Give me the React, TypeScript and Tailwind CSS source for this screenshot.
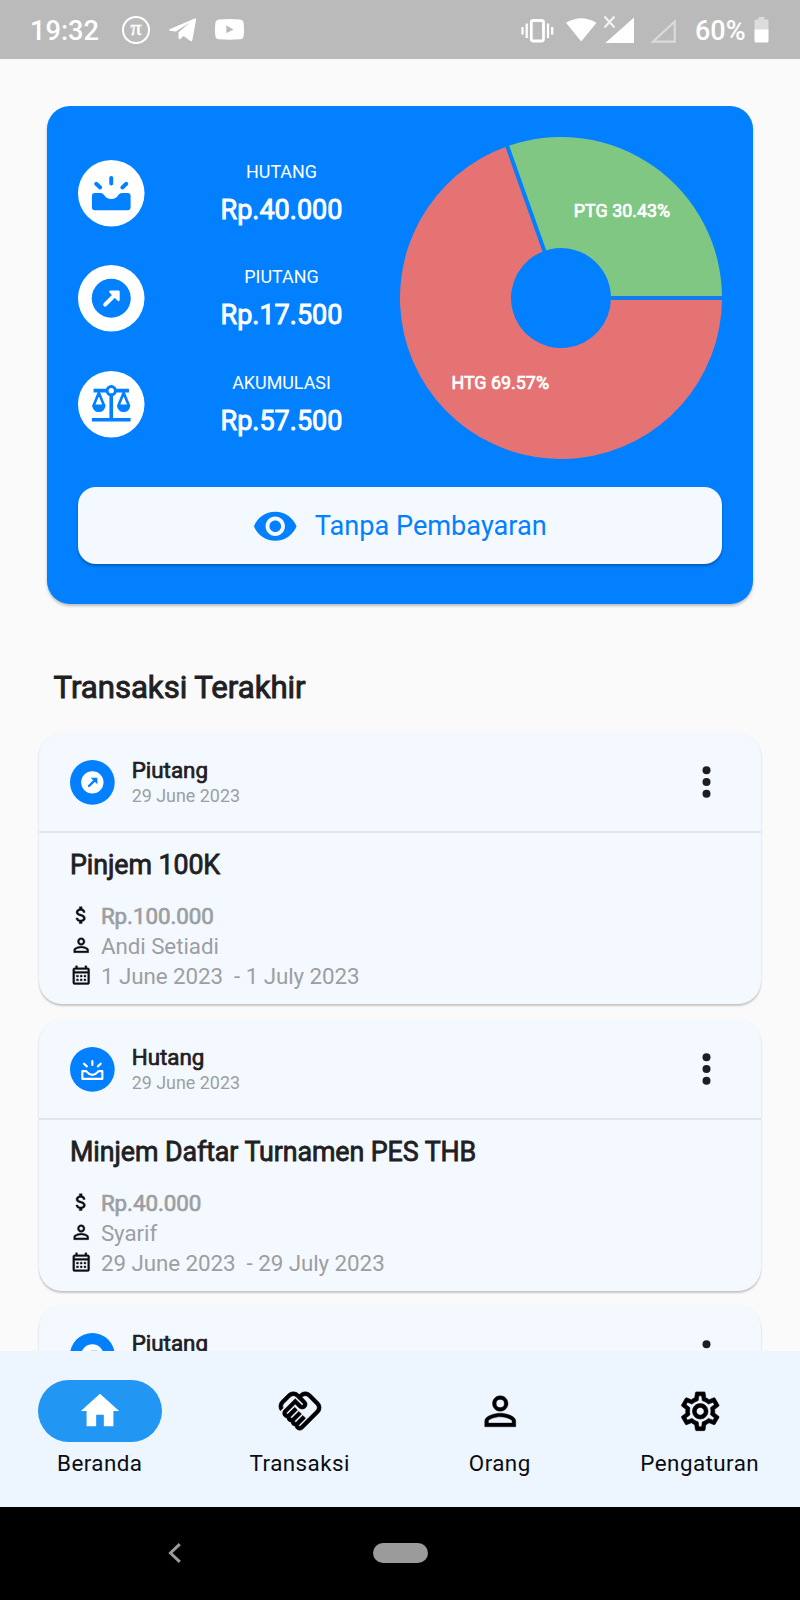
import React from "react";
import {
  MdHome,
  MdOutlineHandshake,
  MdOutlineSettings,
  MdPersonOutline,
  MdVisibility,
  MdAttachMoney,
  MdOutlineCalendarMonth,
} from "react-icons/md";

type Kind = "Piutang" | "Hutang";

function StatusBar() {
  return (
    <header className="flex h-[59px] shrink-0 items-center justify-between bg-[#bababa] text-white">
      <div className="flex items-center pl-[30px]">
        <span className="w-[92px] pt-[2px] text-[27.2px] leading-[58px] font-medium">19:32</span>
        <span className="flex h-[28px] w-[28px] items-center justify-center rounded-full border-[2.3px] border-white pb-[4px] font-['Liberation_Serif',serif] text-[22px] leading-none [-webkit-text-stroke:0.500px_currentColor]">
          π
        </span>
        <svg className="ml-[19px] h-[24px] w-[27px]" viewBox="0 0 27 24" fill="#fff">
          <path d="M0.6 11.2 25.6.6Q27.4 0 27 2L23.4 22Q23 24 21.4 23L14.6 18 11.2 21Q9.8 22 9.6 20L9.4 14.6 20.6 4.8 6.8 13.6 1 12.8Q-.6 12 .6 11.2Z" />
        </svg>
        <svg className="ml-[19px] h-[21px] w-[29px]" viewBox="0 0 29 21">
          <path fill="#fff" d="M4 .5Q14.5-.5 25 .5 28.5 1 28.7 4.500 29.300 10.500 28.700 16.500 28.500 20 25 20.300 14.500 21 4 20.300.500 20 .300 16.500-.300 10.500.300 4.500.500 1 4 .500Z" />
          <path fill="#bababa" d="M11.300 6.500 18.500 10.400 11.300 14.300Z" />
        </svg>
      </div>
      <div className="flex items-center pr-[31px]">
        <svg className="h-[30px] w-[160px]" viewBox="520 14 160 30">
          <rect x="531.3" y="19.500" width="12.200" height="20.500" rx="2" fill="none" stroke="#fff" strokeWidth="2.800" />
          <path stroke="#fff" strokeWidth="2.300" d="M522.500 26v7.500M526.700 22.500v14.500M548 22.500v14.500M552.200 26v7.500" />
          <path fill="#fff" d="M566 21.800Q581.200 12.500 596.500 21.800L582 39.500Q581.200 40.500 580.400 39.500Z" />
          <path fill="#fff" d="M634 16.500V42H605.300Z" />
          <path stroke="#f1f1f1" strokeWidth="2.200" d="M604.500 15.500 614.500 26.500M614.500 15.500 604.500 26.500" />
          <path fill="none" stroke="#dadada" strokeWidth="2.200" d="M674.800 20.500V40.700H653Z" />
        </svg>
        <span className="ml-[15.500px] w-[59px] pt-[2px] text-[27px] leading-[58px] font-medium">60%</span>
        <svg className="h-[26px] w-[15px]" viewBox="0 0 15 26">
          <path fill="#dcdcdc" d="M4.500 0h6v2.500h3Q14.500 2.500 14.500 4v9H.500V4Q.500 2.500 1.500 2.500h3Z" />
          <path fill="#fff" d="M.500 12.500h14V24Q14.500 25.500 13 25.500H2Q.500 25.500.500 24Z" />
        </svg>
      </div>
    </header>
  );
}

function TrayBadge() {
  return (
    <svg className="size-[66.500px] overflow-visible" viewBox="0 0 201 201">
      <circle cx="100.500" cy="100.500" r="100.500" fill="#fff" />
      <path
        fill="#0280ff"
        d="M51 100H68Q75 100 79 106 86 118 100.500 118 115 118 122 106 126 100 133 100H150Q159 100 159 109V143Q159 152 150 152H51Q42 152 42 143V109Q42 100 51 100Z"
      />
      <path stroke="#0280ff" strokeWidth="12" strokeLinecap="round" d="M100.500 54V71M55 72 67 83M146 72 134 83" />
    </svg>
  );
}

function ArrowBadge() {
  return (
    <svg className="size-[66.500px] overflow-visible" viewBox="0 0 201 201">
      <circle cx="100.500" cy="100.500" r="100.500" fill="#fff" />
      <circle cx="100.500" cy="100.500" r="59" fill="#0280ff" />
      <path stroke="#fff" strokeWidth="12" strokeLinecap="round" d="M82 120 112 90" />
      <path fill="#fff" d="M97 77H122Q126 77 126 81V106Q124 112 120 108L95 83Q92 78 97 77Z" />
    </svg>
  );
}

function ScaleBadge() {
  return (
    <svg className="size-[66.500px] overflow-visible" viewBox="0 0 201 201">
      <circle cx="100.500" cy="100.500" r="100.500" fill="#fff" />
      <g fill="none" stroke="#0280ff">
        <path strokeWidth="11" d="M42 147.500H159M100.500 72V147M47 59.500H87M114 59.500H154" />
        <circle cx="100.500" cy="59.500" r="12.500" strokeWidth="9" />
        <path strokeWidth="8" strokeLinejoin="round" d="M63 66 47 105H79ZM138 66 122 105H154Z" />
      </g>
      <path fill="#0280ff" d="M43 104H83Q81 124 63 124 45 124 43 104ZM118 104H158Q156 124 138 124 120 124 118 104Z" />
    </svg>
  );
}

function KindIcon({ kind }: { kind: Kind }) {
  return (
    <svg className="size-[44.700px] shrink-0 overflow-visible" viewBox="0 0 134 134">
      <circle cx="67" cy="67" r="67" fill="#0280ff" />
      {kind === "Piutang" ? (
        <>
          <circle cx="67" cy="67" r="33.500" fill="#fff" />
          <path stroke="#0280ff" strokeWidth="7" strokeLinecap="round" d="M57 78 74 61" />
          <path fill="#0280ff" d="M62 53H82V73Z" />
        </>
      ) : (
        <g fill="none" stroke="#fff" strokeWidth="6.500" strokeLinecap="round" strokeLinejoin="round">
          <path d="M37 72.500H47Q50 72.500 52 76 58 83.500 67 83.500 76 83.500 82 76 84 72.500 87 72.500H97V95.500H37Z" />
          <path d="M67 42V54M42 50 50.500 58M92 50 83.500 58" />
        </g>
      )}
    </svg>
  );
}

function SummaryRow({ icon, label, value }: { icon: React.ReactNode; label: string; value: string }) {
  return (
    <div className="flex h-[66.500px] items-center">
      {icon}
      <div className="flex w-[274px] flex-col items-center text-white">
        <span className="text-[17.900px] leading-[21px]">{label}</span>
        <span className="mt-[12.300px] text-[27px] leading-[32px] [-webkit-text-stroke:0.900px_currentColor]">{value}</span>
      </div>
    </div>
  );
}

function PieChart() {
  return (
    <svg className="-ml-[19px] h-[322px] w-[322px] shrink-0 text-[17.900px]" viewBox="-161 -161 322 322">
      <path fill="#e57373" d="M50 0H161A161 161 0 1 1 -53.700 -151.800L-16.700 -47.100A50 50 0 1 0 50 0Z" />
      <path fill="#81c784" d="M50 0H161A161 161 0 0 0 -53.700 -151.800L-16.700 -47.100A50 50 0 0 1 50 0Z" />
      <path stroke="#0f7cf0" strokeWidth="4" d="M49 0H161" />
      <path stroke="#0280ff" strokeWidth="4" d="M-16.300 -46.100 -54 -152.700" />
      <g fill="#fff" stroke="#fff" strokeWidth="0.700" textAnchor="middle">
        <text x="61" y="-81.400">PTG 30.43%</text>
        <text x="-60.800" y="91">HTG 69.57%</text>
      </g>
    </svg>
  );
}

function SummaryCard() {
  return (
    <section className="mx-[47px] mt-[47px] flex h-[497.500px] shrink-0 flex-col rounded-[23px] bg-[#0280ff] px-[31px] pt-[31.400px] shadow-[0_2px_3px_rgba(0,0,0,0.250)]">
      <div className="flex">
        <div className="flex shrink-0 flex-col gap-[39px] pt-[22.600px]">
          <SummaryRow icon={<TrayBadge />} label="HUTANG" value="Rp.40.000" />
          <SummaryRow icon={<ArrowBadge />} label="PIUTANG" value="Rp.17.500" />
          <SummaryRow icon={<ScaleBadge />} label="AKUMULASI" value="Rp.57.500" />
        </div>
        <PieChart />
      </div>
      <button className="mt-[27.600px] flex h-[77.300px] items-center justify-center gap-[16px] rounded-[18px] bg-[#f4f9ff] pt-[1px] pr-[1px] text-[#0280ff] shadow-[0_2px_3px_rgba(0,0,0,0.300)]">
        <MdVisibility className="size-[46.500px]" />
        <span className="text-[27.150px] leading-[32px]">Tanpa Pembayaran</span>
      </button>
    </section>
  );
}

interface Details {
  title: string;
  amount: string;
  person: string;
  period: string;
}

interface Transaction {
  kind: Kind;
  date?: string;
  details?: Details;
}

const transactions: Transaction[] = [
  {
    kind: "Piutang",
    date: "29 June 2023",
    details: { title: "Pinjem 100K", amount: "Rp.100.000", person: "Andi Setiadi", period: "1 June 2023  - 1 July 2023" },
  },
  {
    kind: "Hutang",
    date: "29 June 2023",
    details: { title: "Minjem Daftar Turnamen PES THB", amount: "Rp.40.000", person: "Syarif", period: "29 June 2023  - 29 July 2023" },
  },
  { kind: "Piutang" },
];

const detailIcon = "mt-[2.500px] mr-[8.500px] size-[22.400px] text-[#0c0d0e] [&>path+path]:[stroke-width:0.400px]";

function TransactionDetails({ title, amount, person, period }: Details) {
  return (
    <>
      <h3 className="mt-[15px] pl-[31px] text-[26.800px] leading-[34px] font-normal tracking-[-0.080px] text-[#1e2023] [-webkit-text-stroke:0.800px_currentColor]">{title}</h3>
      <div className="mt-[19px] flex flex-col pl-[31px] text-[22.350px] leading-[30px] tracking-[-0.050px] whitespace-pre text-[#9c9fa2]">
        <div className="flex h-[30.200px]">
          <MdAttachMoney className={detailIcon} />
          <span className="[-webkit-text-stroke:0.700px_currentColor]">{amount}</span>
        </div>
        <div className="flex h-[30px]">
          <MdPersonOutline className={detailIcon} />
          <span>{person}</span>
        </div>
        <div className="flex h-[30px]">
          <MdOutlineCalendarMonth className={detailIcon} />
          <span>{period}</span>
        </div>
      </div>
    </>
  );
}

function TransactionCard({ item }: { item: Transaction }) {
  return (
    <article className="flex h-[271.500px] shrink-0 flex-col rounded-[23px] bg-[#f4f9ff] shadow-[0_2px_2px_rgba(0,0,0,0.200),0_0_2px_rgba(0,0,0,0.060)]">
      <div className="flex h-[100.500px] items-center border-b-2 border-[#e0e6ec] pr-[50px] pl-[31px]">
        <KindIcon kind={item.kind} />
        <div className="ml-[17px] flex h-[50.500px] grow flex-col">
          <span className="text-[22.400px] leading-[26px] text-[#1e2023] [-webkit-text-stroke:0.700px_currentColor]">{item.kind}</span>
          {item.date && <span className="text-[17.900px] leading-[25px] text-[#9c9fa2]">{item.date}</span>}
        </div>
        <svg className="h-[34px] w-[9px]" viewBox="0 0 9 34" fill="#1c1e21">
          <circle cx="4.500" cy="5.300" r="4" />
          <circle cx="4.500" cy="17" r="4" />
          <circle cx="4.500" cy="28.700" r="4" />
        </svg>
      </div>
      {item.details && <TransactionDetails {...item.details} />}
    </article>
  );
}

function NavItem({ icon, label, active }: { icon: React.ReactNode; label: string; active?: boolean }) {
  return (
    <div className="flex w-[200px] flex-col items-center pt-[29px]">
      <div
        className={
          active
            ? "flex h-[62px] w-[124px] items-center justify-center rounded-full bg-[#2196f3] text-white"
            : "flex h-[62px] w-[124px] items-center justify-center text-black"
        }
      >
        {icon}
      </div>
      <span className="mt-[7px] pr-[0.500px] text-[22.400px] leading-[28px] tracking-[0.450px] text-[#0a0d12]">{label}</span>
    </div>
  );
}

export default function App() {
  return (
    <div className="flex h-[1600px] w-[800px] flex-col overflow-hidden bg-[#fafafa] font-[Roboto,sans-serif]">
      <StatusBar />
      <main className="flex h-[1292px] shrink-0 flex-col overflow-hidden">
        <SummaryCard />
        <h2 className="mt-[64px] pl-[53.500px] text-[31.200px] leading-[40px] font-normal tracking-[-0.050px] text-[#1e2023] [-webkit-text-stroke:0.900px_currentColor]">
          Transaksi Terakhir
        </h2>
        <div className="mx-[39px] mt-[25.300px] flex flex-col gap-[15.300px]">
          {transactions.map((t, i) => (
            <TransactionCard key={i} item={t} />
          ))}
        </div>
      </main>
      <nav className="flex h-[156px] shrink-0 bg-[#edf5ff]">
        <NavItem active label="Beranda" icon={<MdHome className="size-[46px]" />} />
        <NavItem label="Transaksi" icon={<MdOutlineHandshake className="size-[46px] [&>path+path]:[stroke-width:0.300px]" />} />
        <NavItem label="Orang" icon={<MdPersonOutline className="size-[46.500px] [&>path+path]:[stroke-width:0.200px]" />} />
        <NavItem label="Pengaturan" icon={<MdOutlineSettings className="size-[46.500px] [&>path+path]:[stroke-width:0.300px]" />} />
      </nav>
      <footer className="flex grow items-center bg-black pb-[1px]">
        <svg className="ml-[168px] h-[20px] w-[13px]" viewBox="0 0 13 20">
          <path fill="none" stroke="#9b9b9b" strokeWidth="3" d="M11.800 1.200 2.500 10 11.800 18.800" />
        </svg>
        <div className="ml-[191.500px] h-[19.500px] w-[55px] rounded-full bg-[#9b9b9b]" />
      </footer>
    </div>
  );
}
